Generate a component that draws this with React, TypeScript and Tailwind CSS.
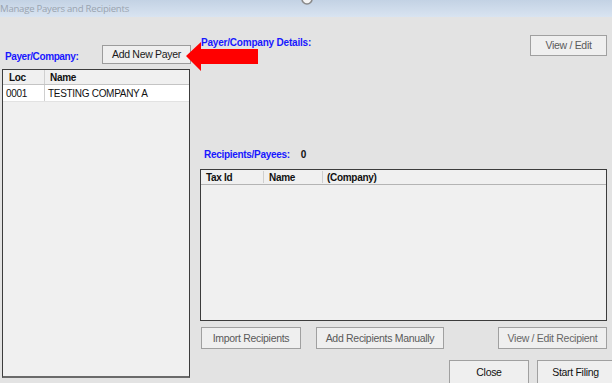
export default function App() {
  return (
    <div className="relative w-[612px] h-[383px] overflow-hidden bg-[#e3e3e3] font-['Liberation_Sans',Arial,sans-serif] text-[10px] tracking-[-0.3px] text-[#111]">
      {/* Title bar */}
      <div className="h-[17px] bg-gradient-to-b from-[#c3d2e4] to-[#d9e4f1] flex items-center">
        <span className="font-['Open_Sans',sans-serif] text-[9.6px] tracking-[-0.25px] text-[#9aa4b0] leading-none pl-[0px] pt-[1px]">
          Manage Payers and Recipients
        </span>
      </div>
      {/* ring at top */}
      <svg className="absolute left-[300px] top-[-8px]" width="14" height="14" viewBox="0 0 14 14">
        <circle cx="7" cy="7" r="5" fill="#f4f4f4" stroke="#8a8a8a" strokeWidth="1.6" />
      </svg>

      <div className="flex">
        {/* Left column */}
        <div className="ml-[2px] w-[188px] flex flex-col">
          <div className="mt-[28px] h-[19px] flex items-center">
            <span className="pl-[3px] pt-[3px] font-bold text-[#1818ff] tracking-[-0.4px]">Payer/Company:</span>
            <button className="ml-auto mr-[-1px] w-[89px] h-[19px] border border-[#9c9c9c] bg-[#efefef] text-[#1a1a1a] text-[10.5px] leading-none">
              Add New Payer
            </button>
          </div>
          <div className="mt-[5px] h-[309px] border border-[#3c3c3c] border-b-[2px] border-b-[#6a6a6a] bg-[#f0f0f0] flex flex-col">
            <div className="h-[15px] flex items-center border-b border-[#c4c4c4] font-bold">
              <div className="w-[42px] h-full flex items-center pl-[6px] border-r border-[#d0d0d0]">Loc</div>
              <div className="pl-[5px]">Name</div>
            </div>
            <div className="h-[17px] flex items-center bg-white border-b border-[#e2e2e2]">
              <div className="w-[42px] h-full flex items-center pl-[3px] border-r border-[#d0d0d0]">0001</div>
              <div className="pl-[3px]">TESTING COMPANY A</div>
            </div>
          </div>
        </div>

        {/* Right column */}
        <div className="ml-[10px] w-[407px] flex flex-col">
          <div className="mt-[18px] h-[21px] flex justify-between items-start">
            <span className="relative z-10 pl-[1px] mt-[2px] leading-[12px] font-bold text-[#1818ff] tracking-[-0.2px]">
              Payer/Company Details:
            </span>
            <button className="w-[77px] h-[21px] border border-[#a0a0a0] bg-[#efefef] text-[#5a5a5a] text-[10.5px] leading-none">
              View / Edit
            </button>
          </div>
          <div className="mt-[93px] h-[12px] leading-[12px] flex font-bold pl-[4px]">
            <span className="text-[#1818ff] tracking-[-0.3px]">Recipients/Payees:</span>
            <span className="ml-[11px] text-[#111]">0</span>
          </div>
          <div className="mt-[8px] h-[152px] w-[407px] border border-[#3c3c3c] bg-[#f0f0f0] flex flex-col">
            <div className="h-[15px] flex items-center border-b border-[#b4b4b4] font-bold">
              <div className="w-[63px] h-[12px] flex items-center pl-[5px] border-r border-[#cfcfcf]">Tax Id</div>
              <div className="w-[59px] h-[12px] flex items-center pl-[5px] border-r border-[#cfcfcf]">Name</div>
              <div className="pl-[4px]">(Company)</div>
            </div>
          </div>
          <div className="mt-[6px] h-[22px] flex">
            <button className="ml-[1px] w-[100px] h-[22px] border border-[#a0a0a0] bg-[#efefef] text-[#5a5a5a] text-[10.5px] leading-none">
              Import Recipients
            </button>
            <button className="ml-[15px] w-[128px] h-[22px] border border-[#a0a0a0] bg-[#efefef] text-[#5a5a5a] text-[10.5px] leading-none">
              Add Recipients Manually
            </button>
            <button className="ml-auto w-[109px] h-[22px] border border-[#a0a0a0] bg-[#efefef] text-[#666] text-[10.5px] leading-none">
              View / Edit Recipient
            </button>
          </div>
          <div className="mt-[11px] h-[24px] flex justify-end gap-[8px] mr-[-7px]">
            <button className="w-[80px] h-[24px] border border-[#a0a0a0] bg-[#efefef] text-[#111] text-[10.5px] leading-none">
              Close
            </button>
            <button className="w-[77px] h-[24px] border border-[#a0a0a0] bg-[#efefef] text-[#111] text-[10.5px] leading-none">
              Start Filing
            </button>
          </div>
        </div>
      </div>

      {/* Red arrow overlay */}
      <svg className="absolute left-0 top-0 pointer-events-none" width="612" height="383" viewBox="0 0 612 383">
        <polygon points="186,56 201,42 201,49 258,49 258,64 201,64 201,71" fill="#ff0000" />
      </svg>
    </div>
  );
}
